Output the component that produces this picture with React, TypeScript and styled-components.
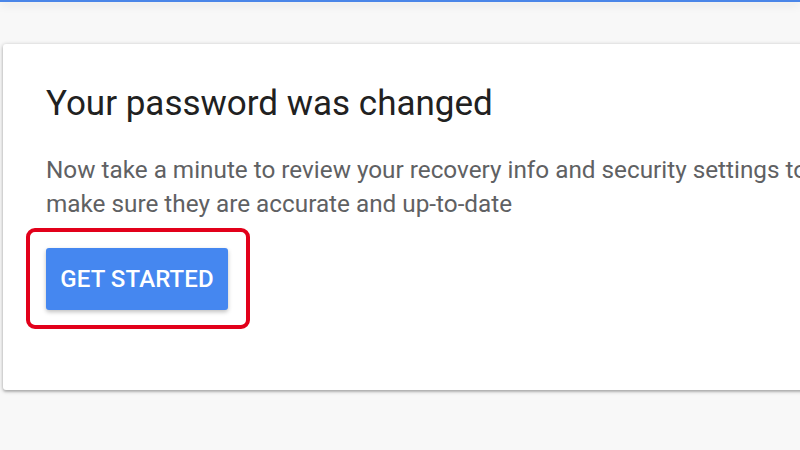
import React from "react";
import styled, { createGlobalStyle } from "styled-components";

const Global = createGlobalStyle`
  html, body { margin: 0; padding: 0; }
  body {
    background: #f8f8f8;
    font-family: Roboto, "Noto Sans", Arial, sans-serif;
    overflow: hidden;
    width: 800px;
    height: 450px;
  }
`;

const Page = styled.div`
  width: 800px;
  height: 450px;
  overflow: hidden;
  background: #f8f8f8;
  display: flex;
  flex-direction: column;
`;

const TopBar = styled.div`
  height: 2px;
  background: #4a86e8;
  box-shadow: 0 2px 10px rgba(0, 0, 0, 0.18);
  flex-shrink: 0;
`;

const Card = styled.section`
  margin: 42px 0 0 3px;
  width: 900px;
  height: 346px;
  box-sizing: border-box;
  background: #fff;
  border-radius: 3px;
  box-shadow: 0 1px 4px rgba(0, 0, 0, 0.3), 0 2px 2px rgba(0, 0, 0, 0.12);
  padding: 40px 0 0 43px;
  flex-shrink: 0;
`;

const Title = styled.h1`
  margin: 0;
  font-family: Roboto, sans-serif;
  font-weight: 400;
  font-size: 35px;
  line-height: 40px;
  color: #212121;
`;

const Body = styled.p`
  margin: 29px 0 0;
  font-family: Roboto, sans-serif;
  font-size: 24.3px;
  line-height: 34px;
  color: #5f6163;
  width: 775px;
`;

const Highlight = styled.div`
  margin: 7px 0 0 -20px;
  width: 224px;
  height: 101px;
  box-sizing: border-box;
  border: 4px solid #e2001a;
  border-radius: 9px;
  padding: 16px 0 0 16px;
`;

const Button = styled.button`
  width: 182px;
  height: 62px;
  border: none;
  border-radius: 3px;
  background: #4587f0;
  color: #fff;
  font-family: Roboto, sans-serif;
  font-weight: 500;
  font-size: 24px;
  letter-spacing: 0.1px;
  padding: 0;
  box-shadow: 0 2px 4px rgba(0, 0, 0, 0.25);
  cursor: pointer;
`;

export default function App() {
  return (
    <>
      <Global />
      <Page>
        <TopBar />
        <Card>
          <Title>Your password was changed</Title>
          <Body>
            Now take a minute to review your recovery info and security settings to
            make sure they are accurate and up-to-date
          </Body>
          <Highlight>
            <Button>GET STARTED</Button>
          </Highlight>
        </Card>
      </Page>
    </>
  );
}
